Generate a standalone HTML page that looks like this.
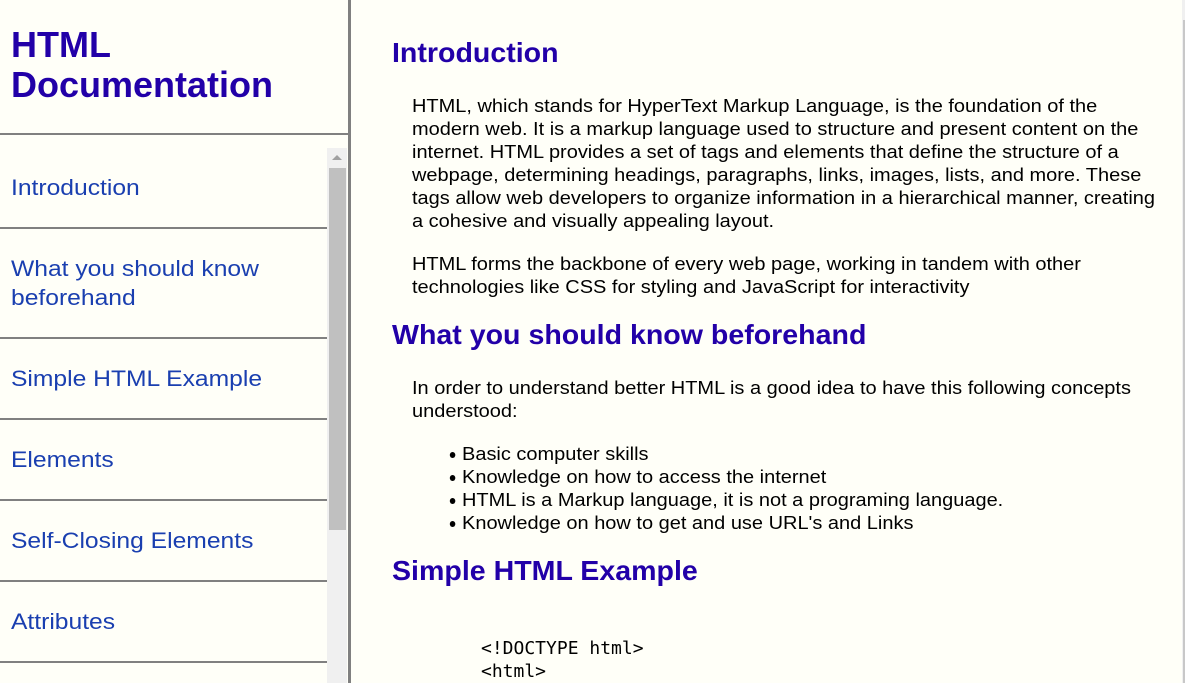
<!DOCTYPE html>
<html><head><style>
*{margin:0;padding:0;box-sizing:border-box}
body{width:1185px;height:683px;overflow:hidden;background:#fffff8;font-family:"Liberation Sans",Arial,sans-serif;position:relative}
.side{position:absolute;left:0;top:0;width:348px;height:683px}
.vline{position:absolute;left:348px;top:0;width:3px;height:683px;background:#808080}
h1{position:absolute;left:11px;top:25px;font-size:36px;line-height:40px;color:#2200a8;font-weight:bold}
.hr{position:absolute;left:0;width:348px;height:2px;background:#808080}
.nav{position:absolute;left:11px;font-size:22px;line-height:29px;color:#1a3fb0;transform:scaleX(1.12);transform-origin:0 0;white-space:nowrap}
.nl{position:absolute;left:0;width:327px;height:2px;background:#808080}
.track{position:absolute;left:327px;top:148px;width:20px;height:535px;background:#f0f0f0}
.thumb{position:absolute;left:329px;top:168px;width:17px;height:362px;background:#c0c0c0}
.arr{position:absolute;left:332px;top:155px;width:0;height:0;border-left:5px solid transparent;border-right:5px solid transparent;border-bottom:5px solid #a0a0a0}
h2{position:absolute;left:392px;font-size:28px;line-height:32px;color:#2200a8;font-weight:bold;white-space:nowrap;transform:scaleX(1.02);transform-origin:0 0}
p{position:absolute;left:412px;font-size:18px;line-height:23px;color:#000;white-space:nowrap;transform:scaleX(1.11);transform-origin:0 0}
ul{position:absolute;left:462px;top:443px;font-size:18px;line-height:23px;list-style:none;white-space:nowrap;transform:scaleX(1.11);transform-origin:0 0}
li{position:relative}
li:before{content:"";position:absolute;left:-11px;top:9px;width:5px;height:6px;border-radius:50%;background:#000}
pre{position:absolute;left:481px;top:637px;font-family:"DejaVu Sans Mono","Liberation Mono",monospace;font-size:18px;line-height:23px}
.rs{position:absolute;left:1182px;top:0;width:3px;height:683px;background:#f0f0f0}
.rs2{position:absolute;left:1183px;top:20px;width:2px;height:663px;background:#c8c8c8}
</style></head><body>
<div class="side">
<h1>HTML<br>Documentation</h1>
<div class="hr" style="top:133px"></div>
<div class="track"></div><div class="thumb"></div><div class="arr"></div>
<div class="nav" style="top:173px">Introduction</div>
<div class="nl" style="top:227px"></div>
<div class="nav" style="top:254px">What you should know<br>beforehand</div>
<div class="nl" style="top:337px"></div>
<div class="nav" style="top:364px">Simple HTML Example</div>
<div class="nl" style="top:418px"></div>
<div class="nav" style="top:445px">Elements</div>
<div class="nl" style="top:499px"></div>
<div class="nav" style="top:526px">Self-Closing Elements</div>
<div class="nl" style="top:580px"></div>
<div class="nav" style="top:607px">Attributes</div>
<div class="nl" style="top:661px"></div>
</div>
<div class="vline"></div>
<h2 style="top:37px">Introduction</h2>
<p style="top:95px">HTML, which stands for HyperText Markup Language, is the foundation of the<br>modern web. It is a markup language used to structure and present content on the<br>internet. HTML provides a set of tags and elements that define the structure of a<br>webpage, determining headings, paragraphs, links, images, lists, and more. These<br>tags allow web developers to organize information in a hierarchical manner, creating<br>a cohesive and visually appealing layout.</p>
<p style="top:253px">HTML forms the backbone of every web page, working in tandem with other<br>technologies like CSS for styling and JavaScript for interactivity</p>
<h2 style="top:319px">What you should know beforehand</h2>
<p style="top:377px">In order to understand better HTML is a good idea to have this following concepts<br>understood:</p>
<ul><li>Basic computer skills</li><li>Knowledge on how to access the internet</li><li>HTML is a Markup language, it is not a programing language.</li><li>Knowledge on how to get and use URL's and Links</li></ul>
<h2 style="top:555px">Simple HTML Example</h2>
<pre>&lt;!DOCTYPE html&gt;
&lt;html&gt;</pre>
<div class="rs"></div><div class="rs2"></div>
</body></html>
